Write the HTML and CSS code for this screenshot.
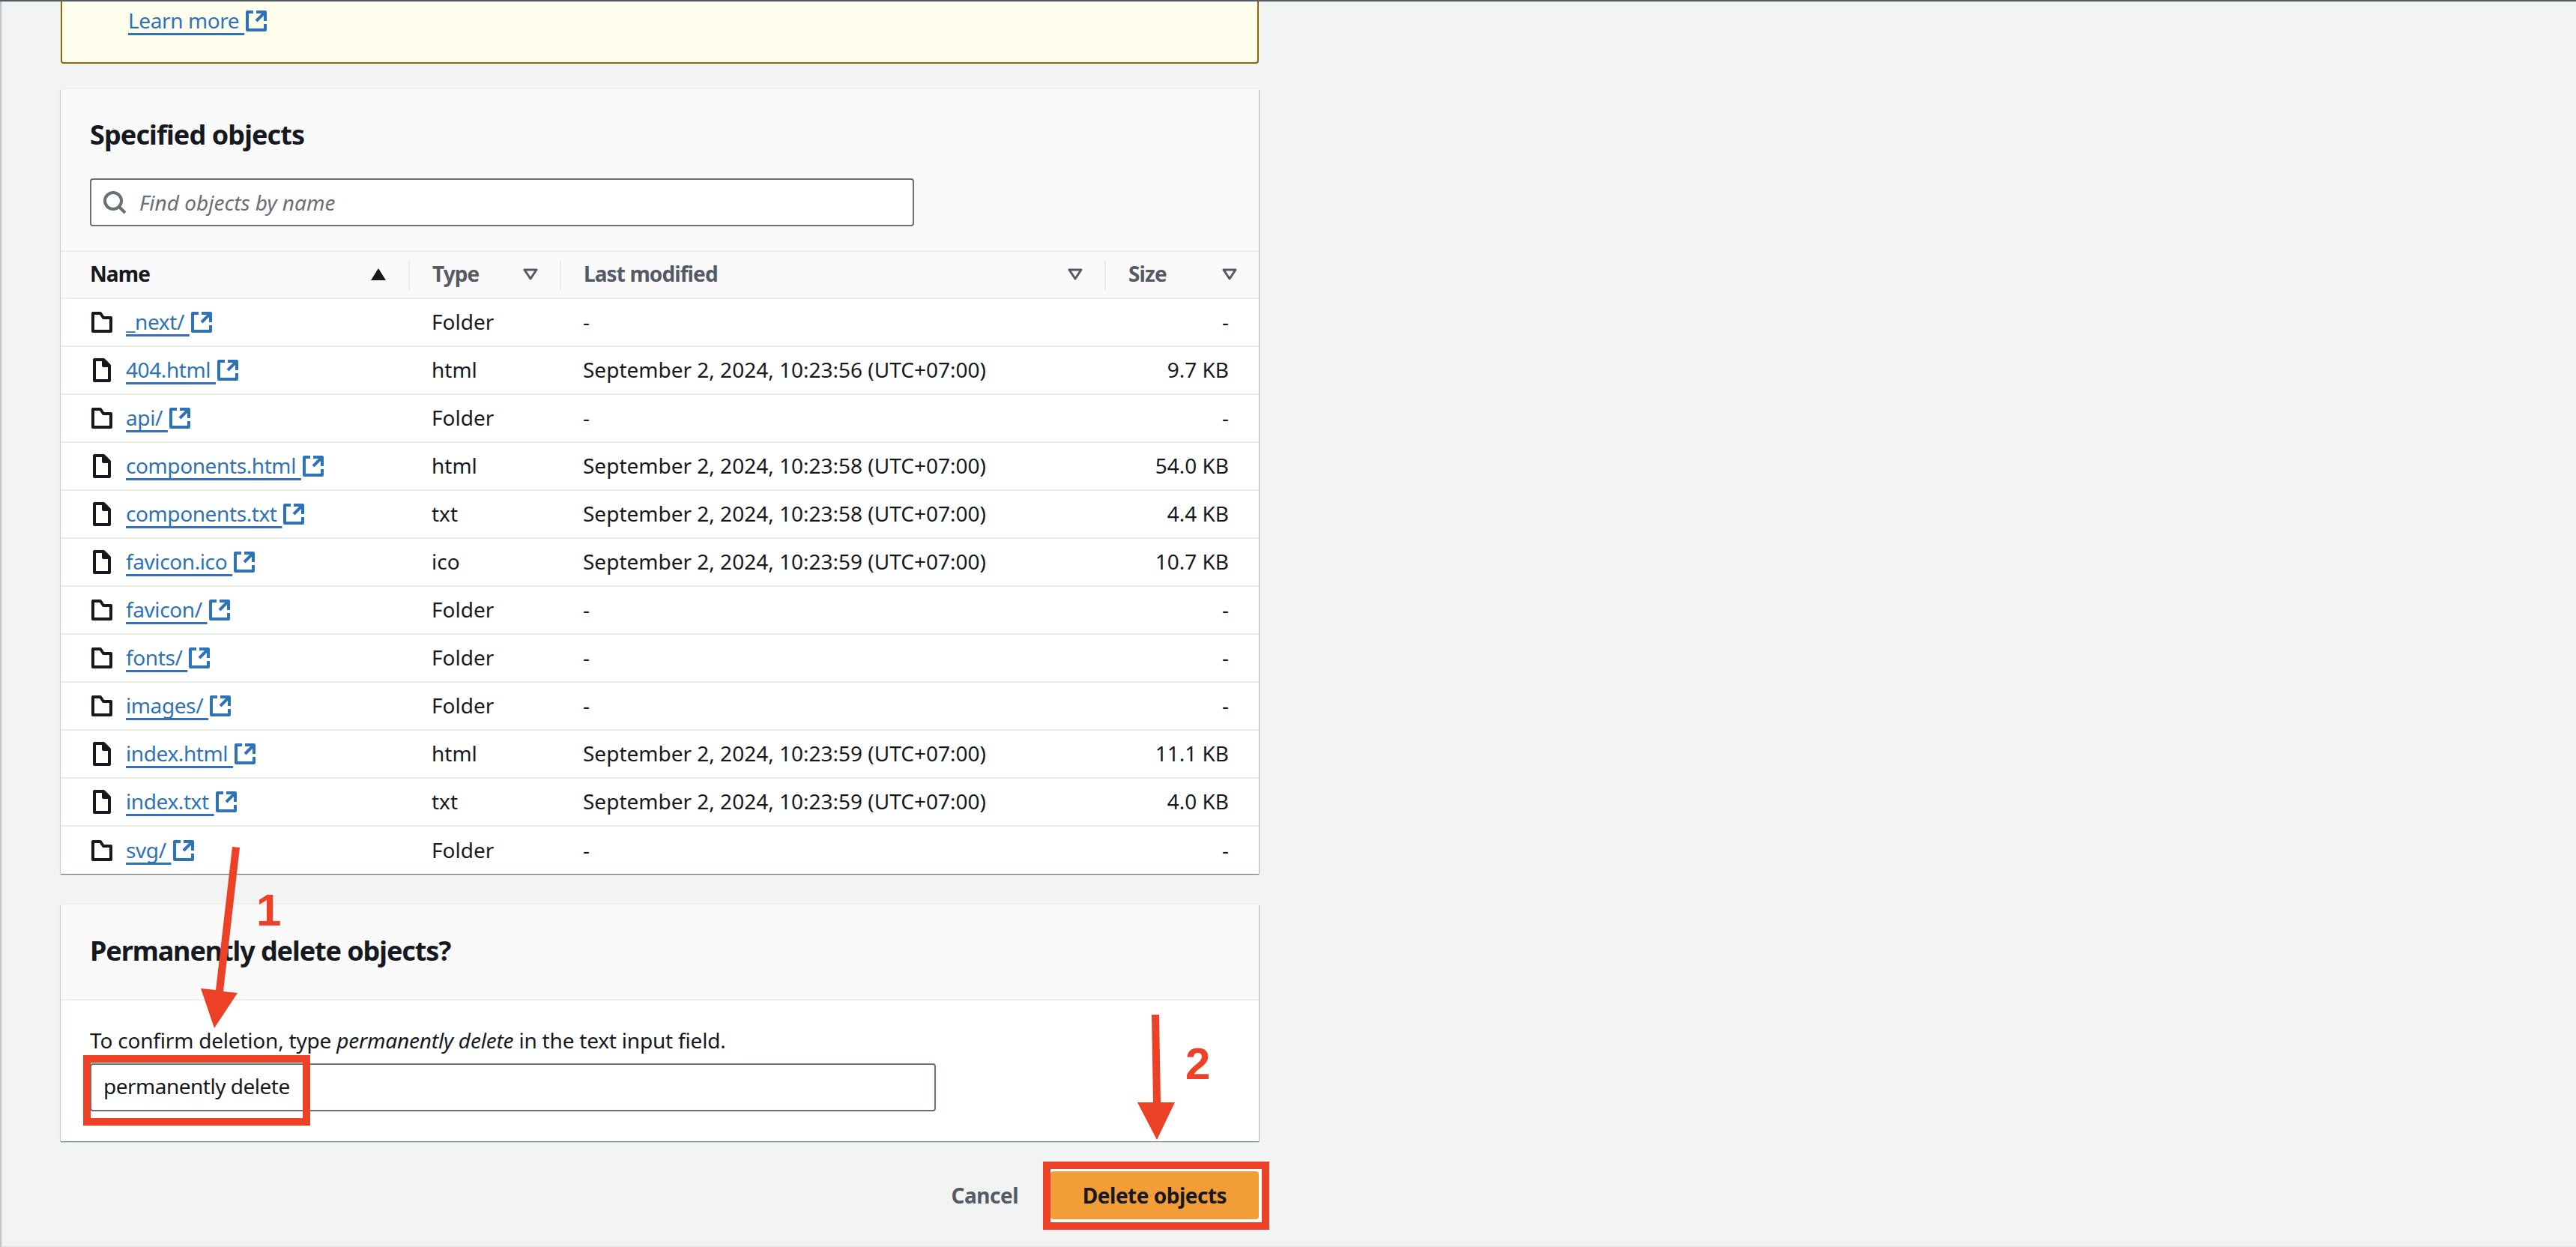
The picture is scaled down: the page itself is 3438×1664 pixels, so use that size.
FILE: index.html
```html
<!DOCTYPE html>
<html lang="en">
<head>
  <meta charset="UTF-8" />
  <title>Delete objects</title>
  <link rel="stylesheet" href="styles.css">
</head>
<body>
  <svg class="sprites" width="0" height="0">
    <symbol id="ext" viewBox="0 0 16 16"><path d="M14 8V2H8M14 2 8 8M6 2H2v12h12v-4" /></symbol>
    <symbol id="folder" viewBox="0 0 16 16"><path d="M14 14H2V2h5l2 3h5z" /></symbol>
    <symbol id="file" viewBox="0 0 16 16"><path d="M3 15V1h6l4 4v10z" /><path class="fold" d="M9 1v4h4z" /></symbol>
  </svg>

  <div class="topbar"></div>
  <div class="main">
    <div class="warning">
      <a class="link" href="#">Learn more&nbsp;</a><svg class="icon"><use href="#ext" /></svg>
    </div>

    <section class="card objects">
      <div class="card-head">
        <h2>Specified objects</h2>
        <div class="search">
          <svg class="search-icon" viewBox="0 0 16 16"><circle cx="7" cy="7" r="5.5" /><path d="m11 11 4 4" /></svg>
          <input type="text" placeholder="Find objects by name" />
        </div>
      </div>
      <table>
        <colgroup><col class="c-name"><col class="c-type"><col class="c-date"><col class="c-size"></colgroup>
        <thead>
          <tr>
            <th class="active"><div class="th"><span>Name</span><svg class="sort" viewBox="0 0 20 16"><path class="solid" d="M10 0 20 16H0z" /></svg></div></th>
            <th><div class="th"><span>Type</span><svg class="sort" viewBox="0 0 20 16"><path d="M2 2h16l-8 12z" /></svg></div></th>
            <th><div class="th"><span>Last modified</span><svg class="sort" viewBox="0 0 20 16"><path d="M2 2h16l-8 12z" /></svg></div></th>
            <th><div class="th"><span>Size</span><svg class="sort" viewBox="0 0 20 16"><path d="M2 2h16l-8 12z" /></svg></div></th>
          </tr>
        </thead>
        <tbody>
          <tr><td><div class="name"><svg class="icon dark"><use href="#folder" /></svg><a class="link" href="#">_next/&nbsp;</a><svg class="icon"><use href="#ext" /></svg></div></td><td>Folder</td><td>-</td><td class="num">-</td></tr>
          <tr><td><div class="name"><svg class="icon dark"><use href="#file" /></svg><a class="link" href="#">404.html&nbsp;</a><svg class="icon"><use href="#ext" /></svg></div></td><td>html</td><td>September 2, 2024, 10:23:56 (UTC+07:00)</td><td class="num">9.7 KB</td></tr>
          <tr><td><div class="name"><svg class="icon dark"><use href="#folder" /></svg><a class="link" href="#">api/&nbsp;</a><svg class="icon"><use href="#ext" /></svg></div></td><td>Folder</td><td>-</td><td class="num">-</td></tr>
          <tr><td><div class="name"><svg class="icon dark"><use href="#file" /></svg><a class="link" href="#">components.html&nbsp;</a><svg class="icon"><use href="#ext" /></svg></div></td><td>html</td><td>September 2, 2024, 10:23:58 (UTC+07:00)</td><td class="num">54.0 KB</td></tr>
          <tr><td><div class="name"><svg class="icon dark"><use href="#file" /></svg><a class="link" href="#">components.txt&nbsp;</a><svg class="icon"><use href="#ext" /></svg></div></td><td>txt</td><td>September 2, 2024, 10:23:58 (UTC+07:00)</td><td class="num">4.4 KB</td></tr>
          <tr><td><div class="name"><svg class="icon dark"><use href="#file" /></svg><a class="link" href="#">favicon.ico&nbsp;</a><svg class="icon"><use href="#ext" /></svg></div></td><td>ico</td><td>September 2, 2024, 10:23:59 (UTC+07:00)</td><td class="num">10.7 KB</td></tr>
          <tr><td><div class="name"><svg class="icon dark"><use href="#folder" /></svg><a class="link" href="#">favicon/&nbsp;</a><svg class="icon"><use href="#ext" /></svg></div></td><td>Folder</td><td>-</td><td class="num">-</td></tr>
          <tr><td><div class="name"><svg class="icon dark"><use href="#folder" /></svg><a class="link" href="#">fonts/&nbsp;</a><svg class="icon"><use href="#ext" /></svg></div></td><td>Folder</td><td>-</td><td class="num">-</td></tr>
          <tr><td><div class="name"><svg class="icon dark"><use href="#folder" /></svg><a class="link" href="#">images/&nbsp;</a><svg class="icon"><use href="#ext" /></svg></div></td><td>Folder</td><td>-</td><td class="num">-</td></tr>
          <tr><td><div class="name"><svg class="icon dark"><use href="#file" /></svg><a class="link" href="#">index.html&nbsp;</a><svg class="icon"><use href="#ext" /></svg></div></td><td>html</td><td>September 2, 2024, 10:23:59 (UTC+07:00)</td><td class="num">11.1 KB</td></tr>
          <tr><td><div class="name"><svg class="icon dark"><use href="#file" /></svg><a class="link" href="#">index.txt&nbsp;</a><svg class="icon"><use href="#ext" /></svg></div></td><td>txt</td><td>September 2, 2024, 10:23:59 (UTC+07:00)</td><td class="num">4.0 KB</td></tr>
          <tr><td><div class="name"><svg class="icon dark"><use href="#folder" /></svg><a class="link" href="#">svg/&nbsp;</a><svg class="icon"><use href="#ext" /></svg></div></td><td>Folder</td><td>-</td><td class="num">-</td></tr>
        </tbody>
      </table>
    </section>

    <section class="card confirm">
      <div class="card-head">
        <h2>Permanently delete objects?</h2>
      </div>
      <div class="card-body">
        <label for="confirmInput">To confirm deletion, type <em>permanently delete</em> in the text input field.</label>
        <input type="text" id="confirmInput" value="permanently delete" />
      </div>
    </section>

    <div class="actions">
      <a class="cancel" href="#">Cancel</a>
      <button type="button" class="primary">Delete objects</button>
    </div>
  </div>

  <!-- red annotations drawn over the screenshot -->
  <div class="mark mark-input"></div>
  <div class="mark mark-button"></div>
  <span class="step step-1">1</span>
  <span class="step step-2">2</span>
  <svg class="arrows" viewBox="0 0 3438 1664">
    <path d="M310 1130 320 1131 298 1323 317 1325 286 1372 268 1319 288 1321z" />
    <path d="M1537 1354h10l2 117h19l-24 50-26-50h21z" />
  </svg>
</body>
</html>
```

FILE: styles.css
```css
* { box-sizing: border-box; }
html, body { margin: 0; height: 1664px; overflow: hidden; }
body { position: relative; background: #f2f3f3; color: #16191f; font-family: "Noto Sans", sans-serif; font-size: 28px; line-height: 40px; box-shadow: inset 2px 0 2px rgba(0, 28, 36, .22); }

.sprites { position: absolute; }
.topbar { height: 2px; background: #545b64; }
.main { width: 1599px; margin-left: 81px; }

.link { color: #2e73b8; letter-spacing: -.4px; text-decoration: underline; text-decoration-thickness: 2.5px; text-underline-offset: 6px; text-decoration-skip-ink: none; white-space: pre; }
.icon { width: 32px; height: 32px; flex: none; fill: none; stroke: #2e73b8; stroke-width: 2; stroke-linejoin: round; vertical-align: -6px; }
.icon.dark { stroke: #16191f; }
.fold { fill: #16191f; }

.warning { height: 83px; padding: 5px 0 0 88px; background: #fffdeb; border: 2px solid #8d6605; border-top: none; border-radius: 0 0 4px 4px; }

.card { background: #fff; box-shadow: 0 -1px 0 #eaeded, 0 1px 1px rgba(0, 28, 36, .4), 1px 1px 1px rgba(0, 28, 36, .2), -1px 1px 1px rgba(0, 28, 36, .12); }
.objects { margin-top: 34px; }
.card-head { background: #fafafa; padding: 39px 39px 32px; }
.card-head h2 { margin: 0; font-size: 36px; line-height: 44px; font-weight: 700; letter-spacing: -.9px; }
.confirm .card-head h2 { letter-spacing: -1.1px; }

.search { display: flex; align-items: center; width: 1100px; height: 64px; margin-top: 36px; background: #fff; border: 2px solid #687078; border-radius: 4px; }
.search-icon { width: 32px; height: 32px; margin-left: 15px; fill: none; stroke: #687078; stroke-width: 2; }
.search input { flex: 1; height: 100%; padding: 0 0 0 17px; border: none; background: none; outline: none; font: inherit; }
.search input::placeholder { color: #687078; font-style: italic; opacity: 1; }

table { width: 100%; border-collapse: collapse; table-layout: fixed; }
.c-name { width: 464px; }
.c-type { width: 202px; }
.c-date { width: 727px; }
th { height: 63px; padding: 10px 0; background: #fafafa; border-top: 2px solid #eaeded; border-bottom: 2px solid #eaeded; text-align: left; font-weight: 700; color: #545b64; letter-spacing: -.9px; }
th.active { color: #16191f; }
.th { display: flex; align-items: center; justify-content: space-between; height: 40px; padding: 0 29px 0 30px; border-left: 2px solid #eaeded; }
.th span { margin-bottom: 4px; }
th:first-child .th { border-left: none; padding-left: 39px; padding-right: 30px; }
.sort { width: 20px; height: 16px; fill: none; stroke: #545b64; stroke-width: 3; stroke-linejoin: round; margin-top: -2px; }
.solid { fill: #16191f; stroke: none; }

td { height: 64px; padding: 0 0 2px 31px; border-bottom: 2px solid #eaeded; white-space: nowrap; }
tbody tr:last-child td { border-bottom: none; }
td:first-child { padding: 0 0 0 39px; }
td.num { padding: 0 40px 2px 0; text-align: right; }
.name { display: flex; align-items: center; }
.name .dark { margin-right: 16px; }
.name .link { margin-bottom: 2px; }

.confirm { margin-top: 41px; }
.confirm .card-head { height: 128px; padding-top: 40px; border-bottom: 2px solid #eaeded; }
.card-body { padding: 33px 39px 40px; }
.card-body label { display: block; margin-bottom: 11px; letter-spacing: -.2px; }
.card-body input { display: block; width: 1129px; height: 64px; padding: 0 16px 4px; background: #fff; border: 2px solid #687078; border-radius: 4px; color: #16191f; font: inherit; letter-spacing: -.5px; outline: none; }

.actions { display: flex; align-items: center; justify-content: flex-end; margin-top: 40px; }
.cancel { margin-right: 43px; color: #545b64; font-weight: 700; letter-spacing: -.5px; text-decoration: none; }
.primary { position: relative; z-index: 2; width: 278px; height: 64px; background: #f29d38; border: none; border-radius: 4px; color: #16191f; font: inherit; font-weight: 700; letter-spacing: -.5px; }

.mark { position: absolute; border: 10px solid #ec4126; }
.mark-input { left: 111px; top: 1408px; width: 303px; height: 94px; }
.mark-button { left: 1392px; top: 1550px; width: 302px; height: 91px; background: #fff; background-clip: padding-box; }
.step { position: absolute; z-index: 3; color: #ec4126; font-family: "Liberation Sans", sans-serif; font-weight: 700; font-size: 60px; line-height: 60px; }
.step-1 { left: 342px; top: 1185px; }
.step-2 { left: 1582px; top: 1390px; }
.arrows { position: absolute; left: 0; top: 0; width: 3438px; height: 1664px; z-index: 3; fill: #ec4126; pointer-events: none; }
```
